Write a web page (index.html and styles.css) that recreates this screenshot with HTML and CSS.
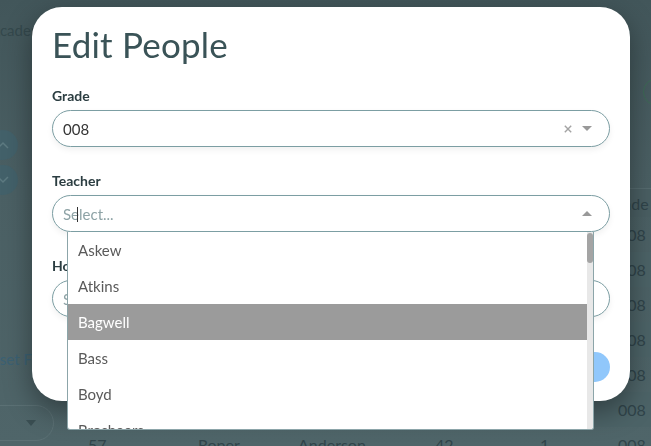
FILE: index.html
```html
<!DOCTYPE html>
<html lang="en">
<head>
<meta charset="utf-8">
<title>Edit People</title>
<link rel="stylesheet" href="styles.css">
</head>
<body>
<div class="page">
  <aside class="side">
    <div class="side-title">Academic</div>
    <div class="arrows">
      <span class="arrow-btn"><svg width="12" height="8" viewBox="0 0 12 8"><path d="M1 7 L6 2 L11 7" fill="none" stroke="#5d7a81" stroke-width="1.5"/></svg></span>
      <span class="arrow-btn"><svg width="12" height="8" viewBox="0 0 12 8"><path d="M1 1 L6 6 L11 1" fill="none" stroke="#5d7a81" stroke-width="1.5"/></svg></span>
    </div>
    <div class="reset">Reset Filters</div>
    <div class="side-select"><span class="side-caret"></span></div>
  </aside>
  <main class="main">
    <div class="toolbar"><span class="ring"></span></div>
    <div class="grid">
      <div class="row head"><span>ID</span><span>First</span><span>Last</span><span>Room</span><span>Period</span><span>Grade</span></div>
      <div class="row"><span>51</span><span>Lee</span><span>Adams</span><span>12</span><span>1</span><span>008</span></div>
      <div class="row alt"><span>52</span><span>Ruiz</span><span>Baker</span><span>14</span><span>1</span><span>008</span></div>
      <div class="row"><span>53</span><span>Moss</span><span>Carter</span><span>18</span><span>1</span><span>008</span></div>
      <div class="row alt"><span>54</span><span>Hale</span><span>Dixon</span><span>21</span><span>1</span><span>008</span></div>
      <div class="row"><span>55</span><span>Kent</span><span>Ellis</span><span>30</span><span>1</span><span>008</span></div>
      <div class="row alt"><span>56</span><span>Park</span><span>Foster</span><span>36</span><span>1</span><span>008</span></div>
      <div class="row"><span>57</span><span>Roper</span><span>Anderson</span><span>42</span><span>1</span><span>008</span></div>
    </div>
  </main>
</div>

<div class="overlay">
  <div class="modal">
    <h1 class="title">Edit People</h1>

    <div class="field">
      <label class="label">Grade</label>
      <div class="select">
        <span class="value">008</span>
        <span class="indicators">
          <svg class="clear" width="8" height="8" viewBox="0 0 8 8"><path d="M0.8 0.8 L7.2 7.2 M7.2 0.8 L0.8 7.2" stroke="#a3a3a3" stroke-width="1.4"/></svg>
          <span class="caret-down"></span>
        </span>
      </div>
    </div>

    <div class="field gap">
      <label class="label">Teacher</label>
      <div class="select focused">
        <span class="placeholder">Select...</span>
        <span class="text-cursor"></span>
        <span class="indicators"><span class="caret-up"></span></span>
        <div class="menu">
          <ul class="options">
            <li class="option">Askew</li>
            <li class="option">Atkins</li>
            <li class="option active">Bagwell</li>
            <li class="option">Bass</li>
            <li class="option">Boyd</li>
            <li class="option">Brosheers</li>
          </ul>
          <div class="scrollbar"><div class="thumb"></div></div>
        </div>
      </div>
    </div>

    <div class="field gap">
      <label class="label">Homeroom</label>
      <div class="select">
        <span class="placeholder">Select...</span>
        <span class="indicators"><span class="caret-down"></span></span>
      </div>
    </div>

    <div class="actions">
      <button class="btn-cancel" type="button">Cancel</button>
      <button class="btn-save" type="button">Save</button>
    </div>
  </div>
</div>
</body>
</html>
```

FILE: styles.css
```css
* { box-sizing: border-box; }

html, body {
  margin: 0;
  padding: 0;
  width: 651px;
  height: 446px;
  overflow: hidden;
}

body {
  font-family: Lato, "Open Sans", "Liberation Sans", sans-serif;
  background: linear-gradient(#42565a 0px, #4b6064 190px, #4f6569 446px);
  color: #34474b;
}

/* ---------- background page (dimmed) ---------- */
.page {
  display: flex;
  margin-left: -40px;
  height: 446px;
}

.side {
  width: 95px;
  flex: none;
  display: flex;
  flex-direction: column;
  padding-top: 21px;
}

.side-title {
  padding-left: 30px;
  font-size: 15px;
  line-height: 18px;
  white-space: nowrap;
  color: #34484c;
}

.arrows {
  margin-top: 91px;
  margin-left: 28px;
  display: flex;
  flex-direction: column;
  gap: 5px;
}

.arrow-btn {
  width: 30px;
  height: 30px;
  border-radius: 50%;
  background: #43616a;
  display: flex;
  align-items: center;
  justify-content: center;
}

.reset {
  margin-top: 155px;
  padding-left: 23px;
  font-size: 15px;
  line-height: 18px;
  white-space: nowrap;
  color: #3b6174;
}

.side-select {
  margin-top: 37px;
  margin-left: 14px;
  width: 80px;
  height: 36px;
  border: 1px solid #5b7074;
  border-radius: 18px;
  display: flex;
  align-items: center;
  justify-content: flex-end;
  padding-right: 17px;
}

.side-caret {
  width: 0;
  height: 0;
  border-left: 5px solid transparent;
  border-right: 5px solid transparent;
  border-top: 6px solid #3a4e52;
}

.main {
  flex: 1;
  display: flex;
  flex-direction: column;
}

.toolbar {
  height: 188px;
  flex: none;
  padding-top: 78px;
  padding-left: 588px;
}

.ring {
  display: block;
  width: 28px;
  height: 28px;
  border-radius: 50%;
  border: 1.5px solid #3d6a56;
}

.grid {
  display: flex;
  flex-direction: column;
  padding-left: 21px;
  border-top: 1px solid #566b6f;
}

.row {
  display: grid;
  grid-template-columns: 110px 100px 137px 105px 78px 1fr;
  height: 35px;
  align-items: center;
  font-size: 16px;
  color: #30444a;
  white-space: nowrap;
}

.row span { padding-left: 12px; }

.row.head {
  height: 28px;
  background: #4a5f63;
}

.row.head span { padding-left: 0; }

.row.alt { background: #4c6367; }

/* ---------- overlay & modal ---------- */
.overlay {
  position: fixed;
  inset: 0;
  padding: 7px 21px 0 32px;
}

.modal {
  width: 598px;
  background: #ffffff;
  border-radius: 30px;
  box-shadow: 0 10px 28px rgba(0, 0, 0, 0.38);
  padding: 17px 20px 19px;
  display: flex;
  flex-direction: column;
}

.title {
  margin: 0;
  font-size: 35px;
  font-weight: 400;
  line-height: 40px;
  color: #3a5357;
  letter-spacing: 0.2px;
}

.field { margin-top: 23px; }
.field.gap { margin-top: 25px; }

.label {
  display: block;
  font-size: 14px;
  font-weight: 700;
  line-height: 18px;
  color: #2b3d41;
  margin-bottom: 5px;
}

.select {
  position: relative;
  height: 37px;
  border: 1px solid #7c9ea3;
  border-radius: 19px;
  display: flex;
  align-items: center;
  padding: 0 17px 0 10px;
  background: #fff;
  box-shadow: 0 3px 6px rgba(0, 0, 0, 0.06);
}

.value {
  flex: 1;
  font-size: 15px;
  color: #353535;
}

.placeholder {
  flex: 1;
  font-size: 15px;
  color: #8ea3a6;
}

.text-cursor {
  position: absolute;
  left: 24px;
  top: 11px;
  width: 1px;
  height: 15px;
  background: #333;
}

.indicators {
  display: flex;
  align-items: center;
  gap: 10px;
}

.caret-down {
  width: 0;
  height: 0;
  border-left: 5px solid transparent;
  border-right: 5px solid transparent;
  border-top: 5px solid #999;
}

.caret-up {
  width: 0;
  height: 0;
  border-left: 5px solid transparent;
  border-right: 5px solid transparent;
  border-bottom: 5px solid #999;
}

/* ---------- dropdown menu ---------- */
.menu {
  position: absolute;
  top: 100%;
  left: 14px;
  margin-top: 1px;
  width: 527px;
  height: 198px;
  background: #fff;
  border: 1px solid #8ca5a9;
  border-top: none;
  border-radius: 0 0 3px 3px;
  display: flex;
  overflow: hidden;
  z-index: 5;
}

.options {
  list-style: none;
  margin: 0;
  padding: 0;
  flex: 1;
  overflow: hidden;
}

.option {
  height: 36px;
  line-height: 36px;
  padding-left: 10px;
  font-size: 15px;
  color: #5a5a5a;
}

.option.active {
  background: #9b9b9b;
  color: #ffffff;
}

.scrollbar {
  width: 6px;
  flex: none;
  background: #e8e8e8;
  padding-top: 1px;
}

.thumb {
  height: 30px;
  background: #a4a4a4;
  border-radius: 3px;
}

/* ---------- actions ---------- */
.actions {
  margin-top: 35px;
  display: flex;
  justify-content: flex-end;
  gap: 10px;
}

.actions button {
  height: 30px;
  border: none;
  border-radius: 15px;
  font-family: inherit;
  font-size: 14px;
  font-weight: 700;
  padding: 0 24px;
}

.btn-cancel {
  background: #ffffff;
  color: #3a5357;
}

.btn-save {
  background: #90c7fb;
  color: #ffffff;
}
```
